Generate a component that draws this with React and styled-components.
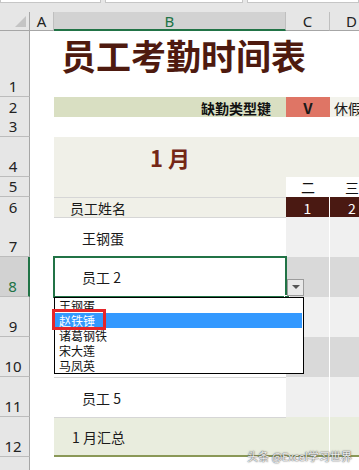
import styled, { createGlobalStyle } from 'styled-components';

const GlobalStyle = createGlobalStyle`
    html, body { margin: 0; padding: 0; background: #fff; }
    * { box-sizing: border-box; }
`;

const cjk = `"Noto Sans CJK SC", "Noto Sans", sans-serif`;
const ui = `"Noto Sans", "Open Sans", sans-serif`;

const Sheet = styled.div`
    position: relative;
    width: 359px;
    height: 470px;
    overflow: hidden;
    background: #fff;
    font-family: ${cjk};
    color: #1a1a1a;
`;

const Strip = styled.div`
    display: flex;
    gap: 4px;
    height: 12px;
    background: #e6e6e6;
`;

const StripBox = styled.div`
    flex: ${p => p.$w ? `0 0 ${p.$w}px` : '1'};
    height: 3px;
    background: #fff;
    border: 1px solid #c6c6c6;
    border-top: none;
`;

const Row = styled.div`
    position: relative;
    z-index: ${p => p.$z || 0};
    display: grid;
    grid-template-columns: 30px 24px 232px 44px 44px;
    height: ${p => p.$h}px;
`;

const Corner = styled.div`
    position: relative;
    background: #e6e6e6;
    border-right: 1px solid #a6a6a6;
    border-bottom: 1px solid #a6a6a6;
`;

const CornerMark = styled.div`
    position: absolute;
    right: 3px;
    bottom: 3px;
    width: 0;
    height: 0;
    border-left: 11px solid transparent;
    border-bottom: 11px solid #c4c4c4;
`;

const ColHead = styled.div`
    display: flex;
    align-items: center;
    justify-content: center;
    background: ${p => p.$active ? '#d2d2d2' : '#e6e6e6'};
    border-right: 1px solid #bfbfbf;
    border-bottom: ${p => p.$active ? '2px solid #217346' : '1px solid #a6a6a6'};
    color: ${p => p.$active ? '#217346' : '#222'};
    font-family: ${ui};
    font-size: 15px;
    line-height: 16px;
`;

const RowHead = styled.div`
    display: flex;
    align-items: flex-end;
    justify-content: center;
    padding-right: 3px;
    background: ${p => p.$active ? '#d2d2d2' : '#e6e6e6'};
    border-right: ${p => p.$active ? '2px solid #217346' : '1px solid #a6a6a6'};
    border-bottom: 1px solid #bcbcbc;
    color: ${p => p.$active ? '#217346' : '#222'};
    font-family: ${ui};
    font-size: 15px;
    line-height: 19px;
`;

const Cell = styled.div`
    position: relative;
    z-index: ${p => p.$front ? 1 : 'auto'};
    display: flex;
    align-items: center;
    justify-content: ${p => p.$align || 'flex-start'};
    padding-left: ${p => p.$pad || 0}px;
    background: ${p => p.$bg || '#fff'};
    border-top: ${p => p.$line ? '1px solid #d6d6d6' : 'none'};
    border-right: ${p => p.$split ? '1px solid #fff' : 'none'};
    font-size: 14px;
    white-space: nowrap;
`;

const Title = styled.div`
    grid-column: span 3;
    padding: 6px 0 0 7px;
    font-size: 35px;
    line-height: 36px;
    font-weight: 700;
    color: #4e1a0f;
    white-space: nowrap;
`;

const KeyLabel = styled(Cell)`
    padding-right: 15px;
    font-weight: 700;
    color: #111;
`;

const KeyMark = styled(Cell)`
    font-weight: 700;
    font-size: 15px;
`;

const Month = styled(Cell)`
    font-size: 22px;
    font-weight: 700;
    color: #742716;
`;

const DayCell = styled(Cell)`
    color: ${p => p.$color || '#111'};
`;

const Summary = styled(Cell)`
    border-bottom: 2px solid #8a9857;
`;

const Selection = styled.div`
    position: absolute;
    inset: -1px;
    border: 2px solid #217346;
    pointer-events: none;
`;

const FillHandle = styled.div`
    position: absolute;
    right: -4px;
    bottom: -4px;
    width: 6px;
    height: 6px;
    background: #217346;
    border: 1px solid #fff;
`;

const ArrowButton = styled.div`
    position: absolute;
    left: 233px;
    top: 22px;
    width: 17px;
    height: 17px;
    display: flex;
    align-items: center;
    justify-content: center;
    padding-bottom: 2px;
    background: #e9e9e9;
    border: 1px solid #9c9c9c;

    &::after {
        content: '';
        width: 0;
        height: 0;
        border-left: 4px solid transparent;
        border-right: 4px solid transparent;
        border-top: 4px solid #555;
    }
`;

const ListBox = styled.div`
    position: absolute;
    left: 0;
    top: 40px;
    width: 250px;
    z-index: 3;
    background: #fff;
    border: 1px solid #000;
`;

const ListItem = styled.div`
    height: 15px;
    margin-right: 1px;
    padding-left: 4px;
    font-size: 12px;
    line-height: 15px;
    background: ${p => p.$picked ? '#3399ff' : 'transparent'};
    color: ${p => p.$picked ? '#fff' : '#111'};
`;

const Marker = styled.div`
    position: absolute;
    left: -3px;
    top: 11px;
    width: 54px;
    height: 21px;
    border: 3px solid #e5262a;
`;

const Watermark = styled.div`
    position: absolute;
    right: 7px;
    bottom: 6px;
    font-size: 11px;
    color: rgba(255, 255, 255, 0.92);
    text-shadow: 0 0 1px #444, 0 0 2px #666;
    white-space: nowrap;
`;

const names = ['王钢蛋', '赵铁锤', '诸葛钢铁', '宋大莲', '马凤英'];

const light = '#f0f0f0';
const dark = '#d9d9d9';
const beige = '#f0f0e8';

const Employee = ({ n, h = 40, label, bg, line, children, active, z }) => (
    <Row $h={h} $z={z}>
        <RowHead $active={active}>{n}</RowHead>
        <Cell />
        <Cell $pad={28} $line={line} $front={active}>{label}{children}</Cell>
        <Cell $bg={bg} $split />
        <Cell $bg={bg} />
    </Row>
);

const App = () => {
    return (
        <Sheet>
            <GlobalStyle />
            <Strip>
                <StripBox $w={101} />
                <StripBox $w={138} />
                <StripBox />
            </Strip>
            <Row $h={19}>
                <Corner><CornerMark /></Corner>
                <ColHead>A</ColHead>
                <ColHead $active>B</ColHead>
                <ColHead>C</ColHead>
                <ColHead>D</ColHead>
            </Row>
            <Row $h={66}>
                <RowHead>1</RowHead>
                <Cell />
                <Title>员工考勤时间表</Title>
            </Row>
            <Row $h={20}>
                <RowHead>2</RowHead>
                <Cell />
                <KeyLabel $bg="#d9dfc2" $align="flex-end">缺勤类型键</KeyLabel>
                <KeyMark $bg="#df7565" $align="center">V</KeyMark>
                <Cell $bg="#f3f3ec" $pad={4}>休假</Cell>
            </Row>
            <Row $h={20}>
                <RowHead>3</RowHead>
                <Cell />
                <Cell />
                <Cell />
                <Cell />
            </Row>
            <Row $h={40}>
                <RowHead>4</RowHead>
                <Cell />
                <Month $bg={beige} $align="center">1 月</Month>
                <Cell $bg={beige} />
                <Cell $bg={beige} />
            </Row>
            <Row $h={20}>
                <RowHead>5</RowHead>
                <Cell />
                <Cell $bg={beige} />
                <DayCell $align="center">二</DayCell>
                <DayCell $align="center">三</DayCell>
            </Row>
            <Row $h={20}>
                <RowHead>6</RowHead>
                <Cell />
                <Cell $bg={beige} $pad={16} $line>员工姓名</Cell>
                <DayCell $bg="#4a1912" $color="#fff" $align="center" $split>1</DayCell>
                <DayCell $bg="#4a1912" $color="#fff" $align="center">2</DayCell>
            </Row>
            <Employee n="7" label="王钢蛋" bg={light} line />
            <Employee n="8" label="员工 2" bg={dark} active z={2}>
                <Selection />
                <FillHandle />
                <ArrowButton />
                <ListBox>
                    {names.map((name, i) => (
                        <ListItem key={name} $picked={i === 1}>{name}</ListItem>
                    ))}
                    <Marker />
                </ListBox>
            </Employee>
            <Employee n="9" bg={light} line />
            <Employee n="10" bg={dark} line />
            <Employee n="11" label="员工 5" bg={light} line />
            <Row $h={40}>
                <RowHead>12</RowHead>
                <Cell />
                <Summary $bg="#e9edde" $pad={18} $line>1 月汇总</Summary>
                <Summary $bg="#e9edde" $split />
                <Summary $bg="#e9edde" />
            </Row>
            <Row $h={40}>
                <RowHead />
                <Cell />
                <Cell />
                <Cell />
                <Cell />
            </Row>
            <Watermark>头条 @Excel学习世界</Watermark>
        </Sheet>
    );
};

export default App;
